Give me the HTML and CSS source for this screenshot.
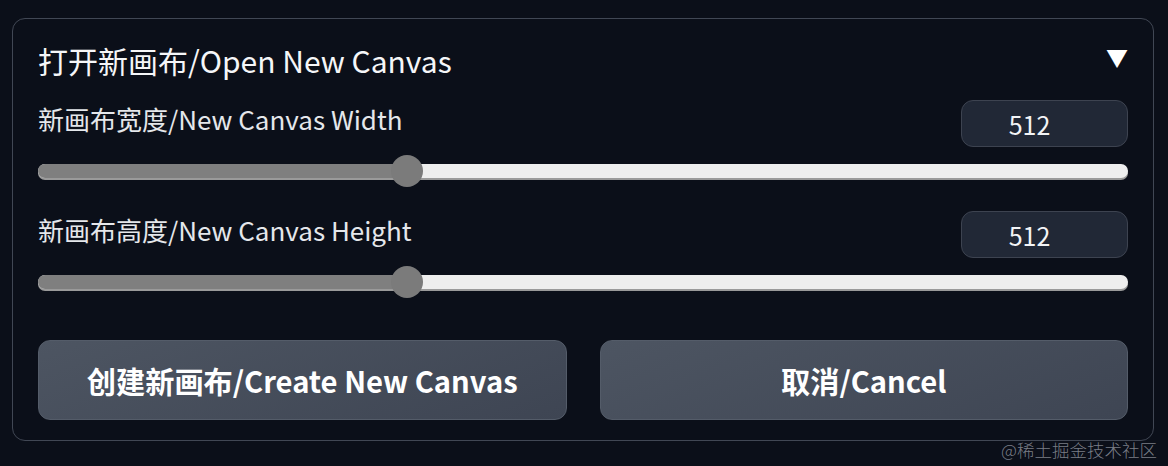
FILE: index.html
```html
<!DOCTYPE html>
<html lang="zh">
<head>
<meta charset="utf-8">
<title>Open New Canvas</title>
<link rel="stylesheet" href="styles.css">
</head>
<body>
<div class="panel">
  <div class="header">
    <span class="title">打开新画布/Open New Canvas</span>
    <span class="caret">▼</span>
  </div>
  <div class="field">
    <div class="field-row">
      <span class="label">新画布宽度/New Canvas Width</span>
      <div class="num">512</div>
    </div>
    <div class="slider">
      <div class="track">
        <div class="fill" style="width: 33.4%"></div>
      </div>
      <div class="thumb" style="left: calc(33.4% + 5px)"></div>
    </div>
  </div>
  <div class="field">
    <div class="field-row">
      <span class="label">新画布高度/New Canvas Height</span>
      <div class="num">512</div>
    </div>
    <div class="slider">
      <div class="track">
        <div class="fill" style="width: 33.4%"></div>
      </div>
      <div class="thumb" style="left: calc(33.4% + 5px)"></div>
    </div>
  </div>
  <div class="actions">
    <button class="btn">创建新画布/Create New Canvas</button>
    <button class="btn">取消/Cancel</button>
  </div>
</div>
<div class="watermark">@稀土掘金技术社区</div>
</body>
</html>
```
FILE: styles.css
```css
html, body {
  margin: 0;
  padding: 0;
  background: #0b0f19;
}
body {
  font-family: "Noto Sans CJK SC", "Noto Sans", sans-serif;
  color: #f3f4f6;
  padding: 18px 14px 0 12px;
  height: 466px;
  box-sizing: border-box;
  position: relative;
  overflow: hidden;
}
.panel {
  border: 1px solid #414754;
  border-radius: 13px;
  padding: 0 25px 20px 25px;
  display: flex;
  flex-direction: column;
}
.header {
  height: 81px;
  display: flex;
  align-items: center;
  justify-content: space-between;
}
.title {
  font-size: 30px;
  font-weight: 400;
  color: #f5f6f8;
  margin-top: 1px;
}
.caret {
  font-size: 22px;
  color: #ffffff;
  line-height: 1;
  margin-top: -8px;
}
.field {
  display: flex;
  flex-direction: column;
}
.field + .field {
  margin-top: 24px;
}
.field-row {
  display: flex;
  justify-content: space-between;
  align-items: flex-start;
}
.label {
  font-size: 26px;
  color: #e5e7eb;
  line-height: 37px;
}
.num {
  width: 135px;
  height: 45px;
  padding-right: 30px;
  box-sizing: content-box;
  border: 1px solid #3d4350;
  border-radius: 12px;
  background: #212836;
  display: flex;
  align-items: center;
  justify-content: center;
  font-size: 25px;
  color: #f3f4f6;
}
.slider {
  position: relative;
  height: 32px;
  margin-top: 8px;
  display: flex;
  align-items: center;
}
.track {
  width: 100%;
  height: 14px;
  border-radius: 8px;
  background: #eeeeee;
  box-shadow: 0 2px 0 #9a9a9a;
  overflow: hidden;
  display: flex;
}
.fill {
  height: 100%;
  background: #7f7f7f;
}
.thumb {
  position: absolute;
  top: 0;
  width: 32px;
  height: 32px;
  margin-left: -16px;
  border-radius: 50%;
  background: #7b7b7b;
}
.actions {
  margin-top: 42px;
  display: grid;
  grid-template-columns: 1fr 1fr;
  gap: 33px;
}
.btn {
  height: 80px;
  border: 1px solid #545c69;
  border-radius: 12px;
  background: linear-gradient(160deg, #4d5562 0%, #3e4553 100%);
  color: #ffffff;
  font-family: "Noto Sans CJK SC", "Noto Sans", sans-serif;
  font-weight: 700;
  font-size: 29.2px;
  padding: 0;
  cursor: pointer;
}
.watermark {
  position: absolute;
  right: 11px;
  bottom: 8px;
  font-size: 17.5px;
  color: rgba(150, 154, 163, 0.8);
  font-family: "Noto Sans CJK SC", sans-serif;
  font-weight: 300;
  line-height: 1;
}
```
